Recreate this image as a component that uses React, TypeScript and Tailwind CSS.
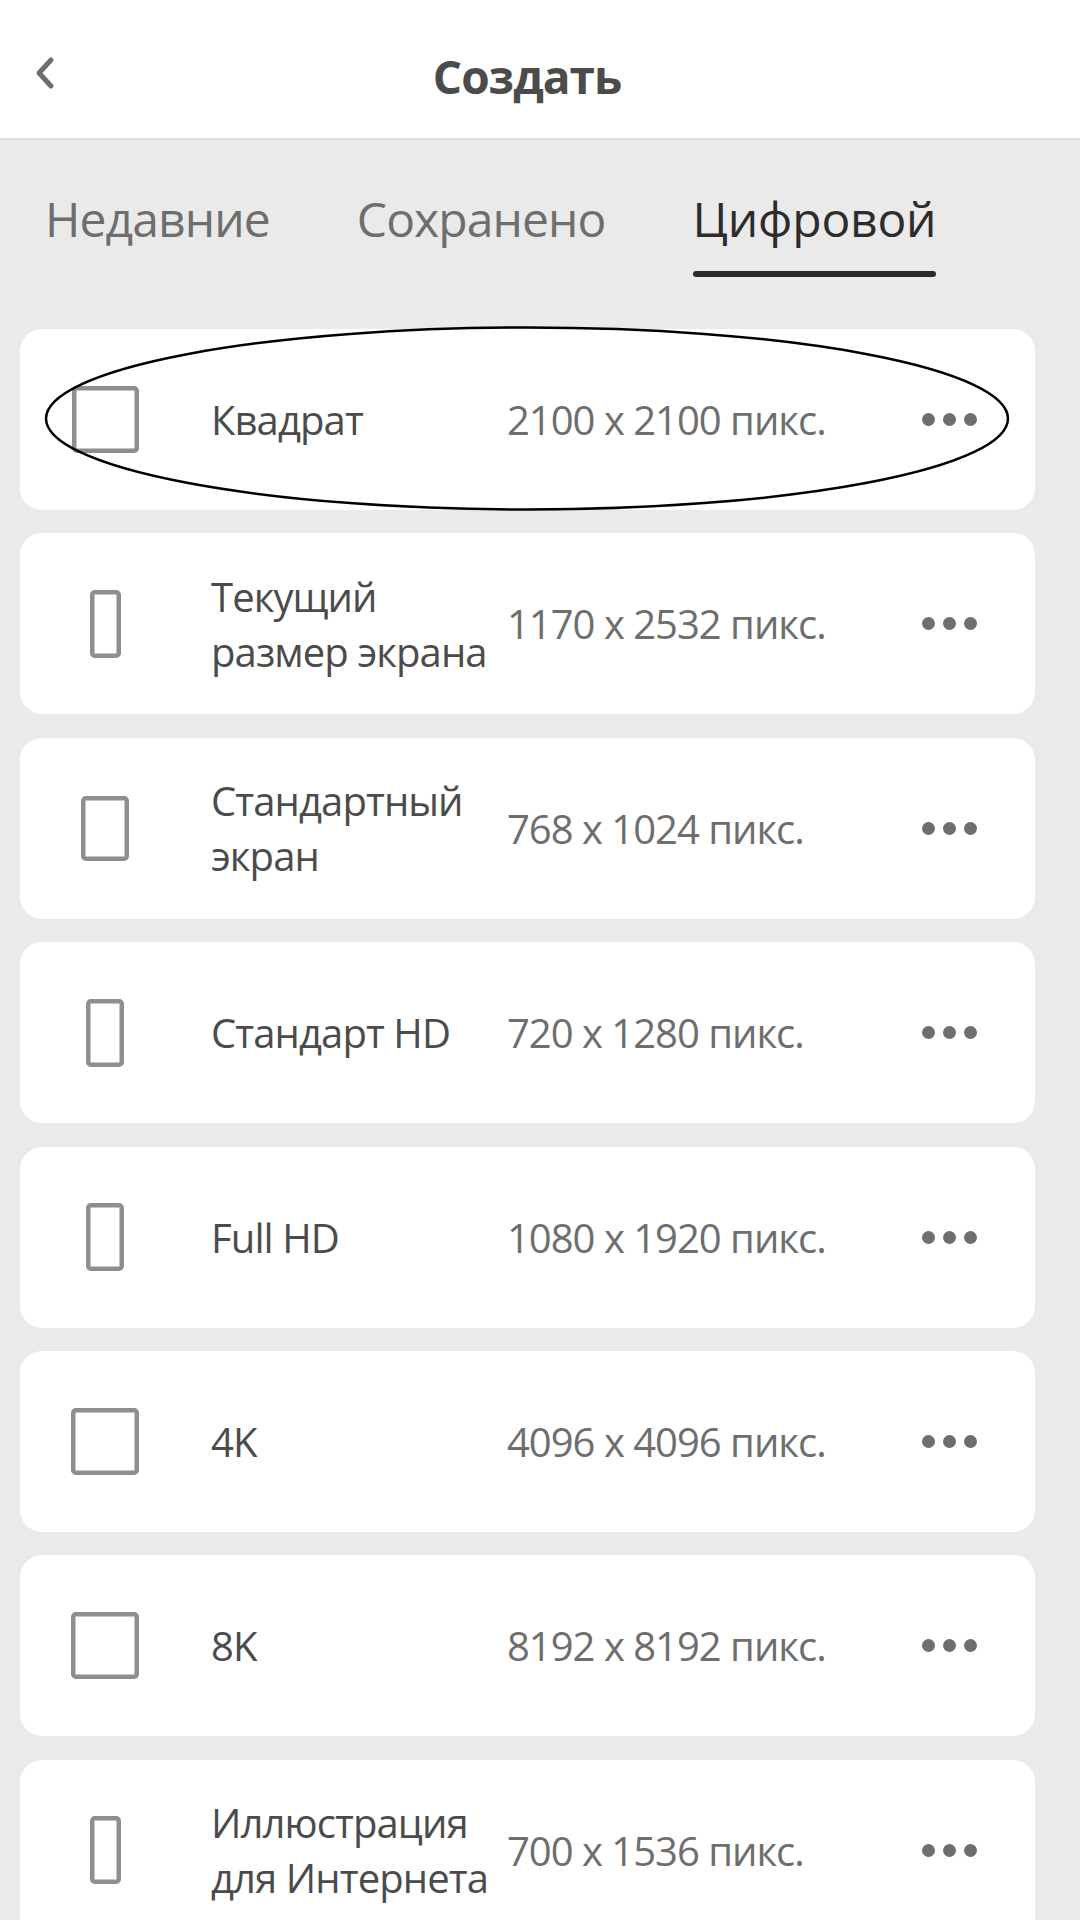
import React from "react";

type Item = { name: string[]; size: string; w: number; h: number };

const items: Item[] = [
  { name: ["Квадрат"], size: "2100 x 2100 пикс.", w: 67, h: 67 },
  { name: ["Текущий", "размер экрана"], size: "1170 x 2532 пикс.", w: 31, h: 68 },
  { name: ["Стандартный", "экран"], size: "768 x 1024 пикс.", w: 48, h: 65 },
  { name: ["Стандарт HD"], size: "720 x 1280 пикс.", w: 38, h: 68 },
  { name: ["Full HD"], size: "1080 x 1920 пикс.", w: 38, h: 68 },
  { name: ["4K"], size: "4096 x 4096 пикс.", w: 68, h: 67 },
  { name: ["8K"], size: "8192 x 8192 пикс.", w: 68, h: 67 },
  { name: ["Иллюстрация", "для Интернета"], size: "700 x 1536 пикс.", w: 31, h: 68 },
];

function FrameIcon({ w, h }: { w: number; h: number }) {
  const s = 4.5;
  return (
    <svg width={w} height={h} viewBox={`0 0 ${w} ${h}`}>
      <rect
        x={s / 2}
        y={s / 2}
        width={w - s}
        height={h - s}
        rx={2.5}
        fill="none"
        stroke="#8e8e8e"
        strokeWidth={s}
      />
    </svg>
  );
}

function Dots() {
  return (
    <div className="flex items-center gap-[8px]">
      <span className="block w-[13px] h-[13px] rounded-full bg-[#6e6e6e]" />
      <span className="block w-[13px] h-[13px] rounded-full bg-[#6e6e6e]" />
      <span className="block w-[13px] h-[13px] rounded-full bg-[#6e6e6e]" />
    </div>
  );
}

function Card({ item, circled }: { item: Item; circled?: boolean }) {
  return (
    <div className="relative h-[181px] shrink-0 bg-white rounded-[22px] flex items-center">
      <div className="w-[170px] flex justify-center items-center">
        <FrameIcon w={item.w} h={item.h} />
      </div>
      <div className="ml-[21px] w-[296px] text-[40px] leading-[55px] text-[#4b4b4b] tracking-[-0.9px]">
        {item.name.map((l) => (
          <div key={l} className="whitespace-nowrap">
            {l}
          </div>
        ))}
      </div>
      <div className="flex-1 text-[40px] leading-[55px] text-[#6e6e6e] whitespace-nowrap tracking-[-1px]">
        {item.size}
      </div>
      <div className="mr-[58px]">
        <Dots />
      </div>
      {circled && (
        <svg
          className="absolute left-[24px] top-[-3px] pointer-events-none"
          width="966"
          height="185"
          viewBox="0 0 966 185"
        >
          <ellipse cx="483" cy="92.5" rx="481" ry="91" fill="none" stroke="#000" strokeWidth="2.5" />
        </svg>
      )}
    </div>
  );
}

export default function App() {
  return (
    <div
      className="w-[1080px] h-[1920px] overflow-hidden bg-[#eaeaea] flex flex-col"
      style={{ fontFamily: '"Open Sans", "Noto Sans", sans-serif' }}
    >
      <header className="h-[140px] shrink-0 bg-white border-b-2 border-[#dedede] grid grid-cols-[1fr_auto_1fr] items-center">
        <div className="pl-[34px] pt-[8px] flex items-center">
          <svg width="24" height="34" viewBox="0 0 24 34">
            <path
              d="M17 4 L5 17 L17 30"
              fill="none"
              stroke="#6e6e6e"
              strokeWidth="5"
              strokeLinecap="round"
              strokeLinejoin="round"
            />
          </svg>
        </div>
        <div className="text-[46px] font-bold text-[#4b4b4b] tracking-[-1px] pt-[14px] pr-[26px]">Создать</div>
        <div />
      </header>

      <nav className="flex pl-[45px] pt-[46px] shrink-0">
        <div className="text-[48px] leading-[66px] text-[#6e6e6e] tracking-[-0.9px]">Недавние</div>
        <div className="ml-[87px] text-[48px] leading-[66px] text-[#6e6e6e] tracking-[-0.9px]">Сохранено</div>
        <div className="ml-[87px] flex flex-col">
          <div className="text-[48px] leading-[66px] text-[#2c2c2c] tracking-[-0.2px]">Цифровой</div>
          <div className="mt-[19px] h-[6px] rounded-full bg-[#2c2c2c]" />
        </div>
      </nav>

      <div className="flex flex-col gap-[23.4px] pl-[20px] pr-[45px] pt-[52px]">
        {items.map((it, i) => (
          <Card key={i} item={it} circled={i === 0} />
        ))}
      </div>
    </div>
  );
}
